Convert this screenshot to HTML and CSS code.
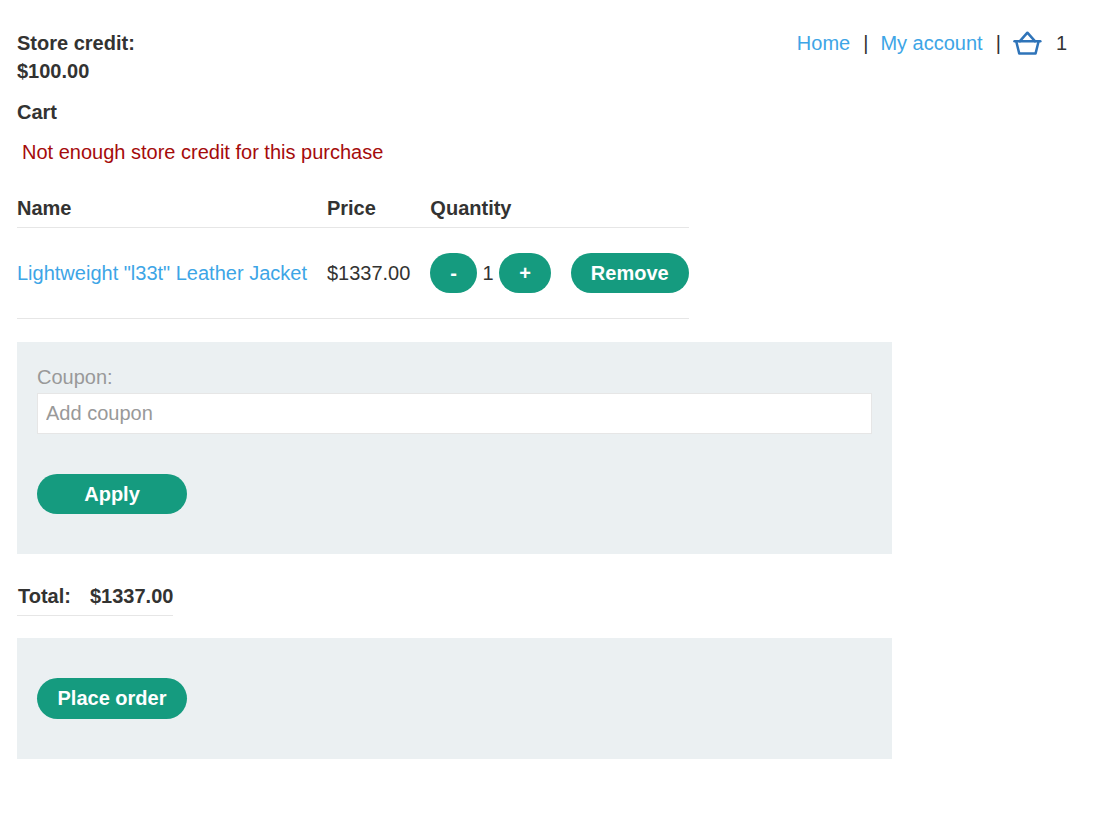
FILE: index.html
```html
<!DOCTYPE html>
<html lang="en">
<head>
  <meta charset="UTF-8" />
  <title>Cart</title>
  <link rel="stylesheet" href="styles.css">
</head>
<body>
  <div class="page">
    <header class="top-row">
      <p class="credit">Store credit:<br>$100.00</p>
      <nav class="top-links">
        <a href="#">Home</a>
        <span class="sep sep-first">|</span>
        <a href="#">My account</a>
        <span class="sep">|</span>
        <a href="#" class="cart-icon" aria-label="Cart">
          <svg width="30" height="24" viewBox="0 0 30 24" fill="none" stroke="#2f74b9" stroke-width="2.500" stroke-linejoin="round" stroke-linecap="round">
            <path d="M2.500 10.200h25.800"/>
            <path d="M4.200 10.200l3 12.200h16.400l3-12.200"/>
            <path d="M7.900 10.200l7.500-8.500 7.500 8.500"/>
          </svg>
        </a>
        <span class="cart-count">1</span>
      </nav>
    </header>

    <p class="cart-title">Cart</p>
    <p class="warning">Not enough store credit for this purchase</p>

    <table class="cart-table">
      <thead>
        <tr>
          <th>Name</th>
          <th>Price</th>
          <th colspan="2">Quantity</th>
        </tr>
      </thead>
      <tbody>
        <tr>
          <td><a href="#">Lightweight "l33t" Leather Jacket</a></td>
          <td>$1337.00</td>
          <td>
            <div class="qty">
              <button class="btn">-</button>
              <span>1</span>
              <button class="btn">+</button>
            </div>
          </td>
          <td class="remove"><button class="btn">Remove</button></td>
        </tr>
      </tbody>
    </table>

    <form class="panel coupon-panel">
      <label for="coupon">Coupon:</label>
      <input id="coupon" type="text" placeholder="Add coupon">
      <button type="button" class="btn btn-wide">Apply</button>
    </form>

    <table class="total-table">
      <tr>
        <th class="total-label">Total:</th>
        <th class="total-value">$1337.00</th>
      </tr>
    </table>

    <form class="panel order-panel">
      <button type="button" class="btn btn-wide btn-tall">Place order</button>
    </form>
  </div>
</body>
</html>
```

FILE: styles.css
```css
* {
  margin: 0;
  padding: 0;
  box-sizing: border-box;
}
body {
  font-family: "Liberation Sans", Arial, sans-serif;
  font-size: 20px;
  line-height: 28px;
  color: #333332;
  background: #fff;
}
a {
  color: #3da5e6;
  text-decoration: none;
}
.page {
  padding: 29px 31px 60px 17px;
}

/* header */
.top-row {
  display: flex;
  justify-content: space-between;
  align-items: flex-start;
}
.credit {
  font-weight: 700;
}
.top-links {
  display: flex;
  align-items: center;
  height: 28px;
}
.sep {
  margin: 0 13px;
}
.sep-first {
  margin-right: 12px;
}
.cart-icon {
  display: flex;
  margin-left: -2px;
}
.cart-count {
  margin-left: 14px;
}
.cart-title {
  font-weight: 700;
  margin-top: 13px;
}
.warning {
  color: #a50b0b;
  margin: 12px 0 0 5px;
}

/* cart table */
.cart-table {
  border-collapse: collapse;
  margin-top: 24px;
}
.cart-table th {
  text-align: left;
  padding: 4px 20px 5px 0;
  border-bottom: 1px solid #e6e6e6;
}
.cart-table td {
  padding: 25px 20px 25px 0;
  border-bottom: 1px solid #e6e6e6;
  white-space: nowrap;
}
.cart-table .remove {
  padding-right: 0;
}
.qty {
  display: flex;
  align-items: center;
  gap: 5.5px;
}
.btn {
  height: 40px;
  padding: 0 20px;
  border: 0;
  border-radius: 25px;
  background: #159b7f;
  color: #fff;
  font: 700 20px "Liberation Sans", Arial, sans-serif;
}
.btn-wide {
  display: block;
  width: 150px;
  padding: 0;
}
.btn-tall {
  height: 41px;
}

/* panels */
.panel {
  width: 875px;
  background: #ebf0f2;
  padding: 20px;
}
.coupon-panel {
  margin-top: 23px;
  padding-top: 21px;
  padding-bottom: 40px;
}
.coupon-panel label {
  display: block;
  color: #999;
}
.coupon-panel input {
  display: block;
  width: 100%;
  height: 41px;
  margin: 2px 0 40px;
  padding: 0 8px;
  border: 1px solid #e6e6e6;
  background: #fff;
  font: 20px "Liberation Sans", Arial, sans-serif;
}
.coupon-panel input::placeholder {
  color: #999;
}
.total-table {
  border-collapse: collapse;
  margin-top: 27px;
}
.total-table th {
  text-align: left;
  padding: 1px 0 5px;
  border-bottom: 1px solid #e6e6e6;
}
.total-table .total-label {
  padding-left: 1px;
  padding-right: 19px;
}
.order-panel {
  margin-top: 22px;
  padding-top: 40px;
  padding-bottom: 40px;
}
```
